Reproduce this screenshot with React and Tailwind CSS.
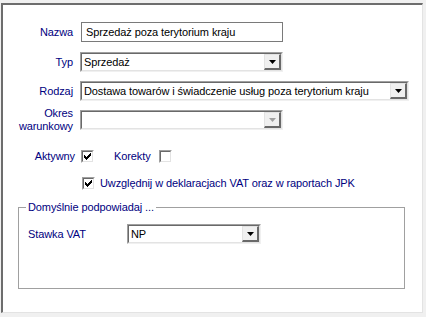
const FONT = { fontFamily: '"Liberation Sans", Arial, sans-serif' }

function Arrow({ disabled }) {
  return (
    <svg width="7" height="4" viewBox="0 0 7 4" className="block">
      <path d="M0 0h7L3.5 4z" fill={disabled ? '#a0a0a0' : '#000'} />
    </svg>
  )
}

function Combo({ width, value, disabled }) {
  return (
    <div
      className="h-[20px] border-t border-l border-t-[#a0a0a0] border-l-[#a0a0a0] border-r border-b border-r-[#f0f0f0] border-b-[#f0f0f0]"
      style={{ width }}
    >
      <div className="h-full flex border-t border-l border-t-[#696969] border-l-[#696969] border-r border-b border-r-[#e3e3e3] border-b-[#e3e3e3] bg-white">
        <div className="flex-1 pl-[2px] leading-[16px] text-black truncate">{value}</div>
        <div className="w-[17px] h-full flex items-center justify-center bg-[#f0f0f0] border-t border-l border-t-[#e3e3e3] border-l-[#e3e3e3] border-r-2 border-b-2 border-r-[#696969] border-b-[#696969]">
          <Arrow disabled={disabled} />
        </div>
      </div>
    </div>
  )
}

function Check({ checked }) {
  return (
    <div className="w-[13px] h-[13px] border-t border-l border-t-[#a0a0a0] border-l-[#a0a0a0] border-r border-b border-r-white border-b-white">
      <div className="w-full h-full bg-white border-t border-l border-t-[#696969] border-l-[#696969] border-r border-b border-r-[#e3e3e3] border-b-[#e3e3e3] flex items-center justify-center">
        {checked && (
          <svg width="7" height="7" viewBox="0 0 7 7" className="block">
            <path d="M0 2h1v1h1v1h1V3h1V2h1V1h1V0h1v3H6v1H5v1H4v1H3v1H2V6H1V5H0z" fill="#000" />
          </svg>
        )}
      </div>
    </div>
  )
}

function Label({ children }) {
  return <div className="w-[70px] text-right text-[#000080] shrink-0">{children}</div>
}

export default function App() {
  return (
    <div className="w-[426px] h-[317px] bg-[#f0f0f0] pt-[3px] pl-[1px] text-[11px] tracking-[-0.1px] overflow-hidden" style={FONT}>
      <div className="w-[422px] h-[310px] bg-white border-t-2 border-l-2 border-t-[#6d6d6d] border-l-[#6d6d6d] border-r border-b border-r-[#e3e3e3] border-b-[#e3e3e3] pt-[17px]">
        {/* Nazwa */}
        <div className="flex items-center h-[20px]">
          <Label>Nazwa</Label>
          <div className="ml-[8px] w-[202px] h-[20px] border border-[#7a7a7a] pl-[4px] leading-[18px] text-black">
            Sprzedaż poza terytorium kraju
          </div>
        </div>

        {/* Typ */}
        <div className="flex items-center h-[20px] mt-[10px]">
          <Label>Typ</Label>
          <div className="ml-[7px]">
            <Combo width={203} value="Sprzedaż" />
          </div>
        </div>

        {/* Rodzaj */}
        <div className="flex items-center h-[20px] mt-[9px]">
          <Label>Rodzaj</Label>
          <div className="ml-[7px]">
            <Combo width={329} value="Dostawa towarów i świadczenie usług poza terytorium kraju" />
          </div>
        </div>

        {/* Okres warunkowy */}
        <div className="flex items-center h-[20px] mt-[9px]">
          <div className="w-[70px] text-right text-[#000080] shrink-0 leading-[13px]">
            Okres
            <br />
            warunkowy
          </div>
          <div className="ml-[7px]">
            <Combo width={203} value="" disabled />
          </div>
        </div>

        {/* Aktywny / Korekty */}
        <div className="flex items-center h-[13px] mt-[20px]">
          <div className="w-[72px] text-right text-[#000080]">Aktywny</div>
          <div className="ml-[6px]">
            <Check checked />
          </div>
          <div className="ml-[20px] text-[#000080]">Korekty</div>
          <div className="ml-[8px]">
            <Check />
          </div>
        </div>

        {/* Uwzglednij */}
        <div className="flex items-center h-[13px] mt-[14px] pl-[79px]">
          <Check checked />
          <div className="ml-[5px] text-[#000080]">Uwzględnij w deklaracjach VAT oraz w raportach JPK</div>
        </div>

        {/* Group */}
        <div className="relative ml-[15px] mt-[17px] w-[387px] h-[82px] border border-[#a0a0a0]">
          <div className="absolute left-[7px] -top-[8px] bg-white px-[2px] text-[#000080] leading-[14px]">
            Domyślnie podpowiadaj ...
          </div>
          <div className="flex items-center h-[20px] mt-[16px] pl-[9px]">
            <div className="w-[99px] text-[#000080]">Stawka VAT</div>
            <Combo width={134} value="NP" />
          </div>
        </div>
      </div>
    </div>
  )
}
